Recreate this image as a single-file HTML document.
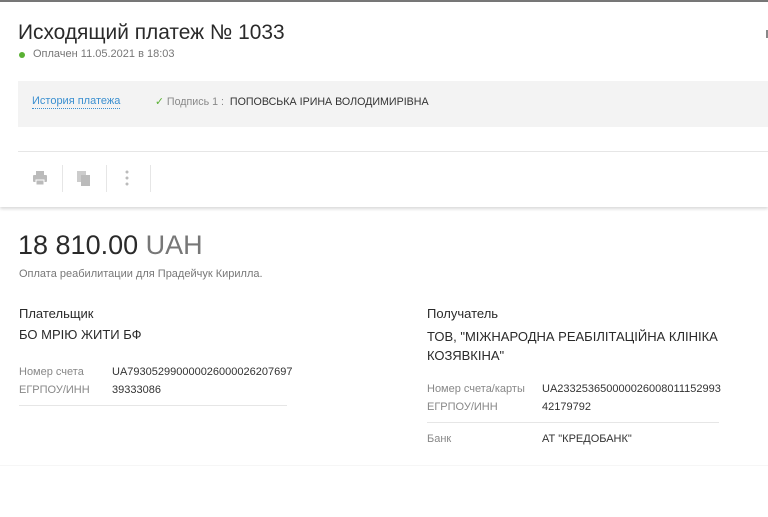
<!DOCTYPE html>
<html><head><meta charset="utf-8"><style>
body{margin:0;width:768px;height:516px;background:#fff;font-family:"Liberation Sans","DejaVu Sans",sans-serif;position:relative;overflow:hidden;color:#222}
.a{position:absolute;white-space:nowrap}
.c{transform-origin:left top;display:inline-block}
</style></head><body>
<div class="a" style="left:0;top:0;width:768px;height:2px;background:#777"></div>
<div class="a" style="left:0;top:2px;width:768px;height:205px;background:#fff;box-shadow:0 2px 3px rgba(0,0,0,0.15)"></div>
<div class="a" style="left:766px;top:30px;width:2px;height:8px;background:#888"></div>
<div class="a" style="left:18px;top:21px;font-size:21px;color:#2a2a2a"><span class="c" style="transform:scaleX(0.995)">Исходящий платеж № 1033</span></div>
<div class="a" style="left:19px;top:52px;width:6px;height:6px;border-radius:50%;background:#5ab134"></div>
<div class="a" style="left:33px;top:48px;font-size:11px;color:#777">Оплачен 11.05.2021 в 18:03</div>
<div class="a" style="left:18px;top:81px;width:750px;height:46px;background:#f3f3f3"></div>
<div class="a" style="left:32px;top:94px;font-size:11px;color:#3a8fd0;border-bottom:1px dotted #3a8fd0;line-height:14px">История платежа</div>
<div class="a" style="left:155px;top:95px;font-size:11px;color:#888"><span class="c" style="transform:scaleX(0.97)"><span style="color:#5ab134">✓</span> Подпись 1 : &nbsp;<span style="color:#333">ПОПОВСЬКА ІРИНА ВОЛОДИМИРІВНА</span></span></div>
<div class="a" style="left:18px;top:151px;width:750px;height:1px;background:#e6e6e6"></div>
<svg class="a" style="left:32px;top:170px" width="16" height="16" viewBox="0 0 16 16"><rect x="4" y="1" width="8" height="4" fill="#bbb"/><rect x="1" y="5" width="14" height="7" rx="1" fill="#bbb"/><rect x="4" y="10" width="8" height="5" fill="#bbb" stroke="#fff" stroke-width="1"/></svg>
<div class="a" style="left:62px;top:165px;width:1px;height:27px;background:#e6e6e6"></div>
<svg class="a" style="left:77px;top:171px" width="16" height="16" viewBox="0 0 16 16"><rect x="0" y="0" width="9" height="11" fill="#ccc"/><rect x="4" y="4" width="9" height="11" fill="#bbb"/></svg>
<div class="a" style="left:106px;top:165px;width:1px;height:27px;background:#e6e6e6"></div>
<svg class="a" style="left:125px;top:170px" width="4" height="16"><circle cx="2" cy="2" r="1.5" fill="#bbb"/><circle cx="2" cy="8" r="1.5" fill="#bbb"/><circle cx="2" cy="14" r="1.5" fill="#bbb"/></svg>
<div class="a" style="left:150px;top:165px;width:1px;height:27px;background:#e6e6e6"></div>
<div class="a" style="left:18px;top:230px;font-size:27px;color:#2a2a2a">18 810.00 <span style="color:#777">UAH</span></div>
<div class="a" style="left:19px;top:268px;font-size:11px;color:#777">Оплата реабилитации для Прадейчук Кирилла.</div>
<div class="a" style="left:19px;top:306px;font-size:13px;color:#2a2a2a">Плательщик</div>
<div class="a" style="left:19px;top:327px;font-size:13px;color:#2a2a2a">БО МРІЮ ЖИТИ БФ</div>
<div class="a" style="left:19px;top:366px;font-size:11px;color:#888">Номер счета</div>
<div class="a" style="left:112px;top:366px;font-size:11px;color:#333">UA793052990000026000026207697</div>
<div class="a" style="left:19px;top:384px;font-size:11px;color:#888">ЕГРПОУ/ИНН</div>
<div class="a" style="left:112px;top:384px;font-size:11px;color:#333">39333086</div>
<div class="a" style="left:19px;top:405px;width:268px;height:1px;background:#e6e6e6"></div>
<div class="a" style="left:427px;top:306px;font-size:13px;color:#2a2a2a">Получатель</div>
<div class="a" style="left:427px;top:327px;font-size:13px;color:#2a2a2a;line-height:19px">ТОВ, "МІЖНАРОДНА РЕАБІЛІТАЦІЙНА КЛІНІКА<br>КОЗЯВКІНА"</div>
<div class="a" style="left:427px;top:383px;font-size:11px;color:#888">Номер счета/карты</div>
<div class="a" style="left:542px;top:383px;font-size:11px;color:#333">UA233253650000026008011152993</div>
<div class="a" style="left:427px;top:401px;font-size:11px;color:#888">ЕГРПОУ/ИНН</div>
<div class="a" style="left:542px;top:401px;font-size:11px;color:#333">42179792</div>
<div class="a" style="left:427px;top:422px;width:292px;height:1px;background:#e6e6e6"></div>
<div class="a" style="left:427px;top:433px;font-size:11px;color:#888">Банк</div>
<div class="a" style="left:542px;top:433px;font-size:11px;color:#333">АТ "КРЕДОБАНК"</div>
<div class="a" style="left:0;top:465px;width:768px;height:51px;background:#fff;border-top:1px solid #f6f6f6"></div>
</body></html>
